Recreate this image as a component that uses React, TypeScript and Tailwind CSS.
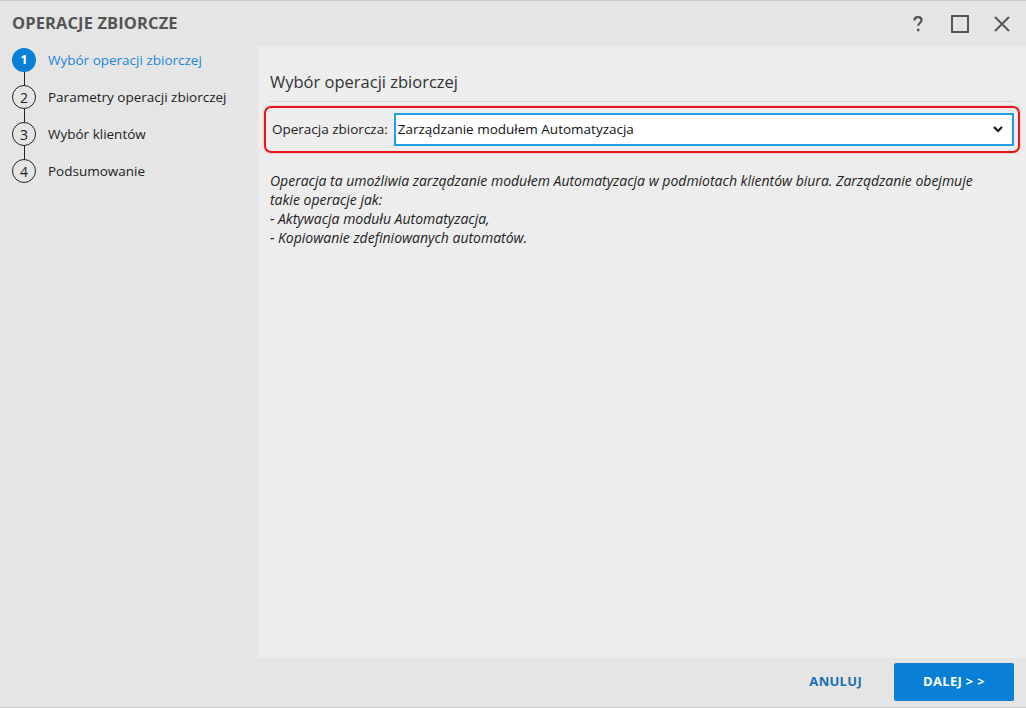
import React from "react";

const steps = [
  { n: 1, label: "Wybór operacji zbiorczej", active: true },
  { n: 2, label: "Parametry operacji zbiorczej", active: false },
  { n: 3, label: "Wybór klientów", active: false },
  { n: 4, label: "Podsumowanie", active: false },
];

export default function App() {
  return (
    <div
      className="w-[1026px] h-[708px] bg-[#e5e5e5] border-t border-b border-[#c8c8c8] flex flex-col overflow-hidden text-[#222]"
      style={{ fontFamily: '"Open Sans", "Noto Sans", sans-serif' }}
    >
      {/* header */}
      <div className="h-[45px] shrink-0 flex items-center pl-[12px] pr-[14px]">
        <div className="text-[16.5px] font-bold text-[#555] tracking-[0.1px] flex-1">OPERACJE ZBIORCZE</div>
        <div className="flex items-center gap-[22px] text-[#555]">
          <svg width="20" height="20" viewBox="0 0 20 20" fill="none">
            <path d="M6.5 6.5c0-2 1.6-3.3 3.5-3.3s3.5 1.2 3.5 3.1c0 2.6-3.3 2.8-3.3 5.4" stroke="#555" strokeWidth="2.2" fill="none" />
            <circle cx="10.2" cy="16" r="1.4" fill="#555" />
          </svg>
          <svg width="20" height="20" viewBox="0 0 20 20">
            <rect x="2" y="2" width="16" height="16" stroke="#555" strokeWidth="2" fill="none" />
          </svg>
          <svg width="20" height="20" viewBox="0 0 20 20">
            <path d="M3 3L17 17M17 3L3 17" stroke="#555" strokeWidth="2" />
          </svg>
        </div>
      </div>
      <div className="flex flex-1 min-h-0">
        {/* sidebar */}
        <div className="w-[258px] shrink-0 pl-[12px] pt-[2px]">
          {steps.map((s, i) => (
            <div key={s.n} className="flex flex-col">
              {i > 0 && <div className="ml-[11.5px] w-px h-[13px] bg-[#222]" />}
              <div className="flex items-center h-[24px]">
                <div
                  className={
                    s.active
                      ? "w-[24px] h-[24px] rounded-full bg-[#0a7fd6] text-white flex items-center justify-center text-[13px] font-bold"
                      : "w-[24px] h-[24px] rounded-full border-[1.5px] border-[#222] text-[#222] flex items-center justify-center text-[14px]"
                  }
                >
                  {s.n}
                </div>
                <div className={"ml-[12px] text-[13.5px] " + (s.active ? "text-[#1a88d8]" : "text-[#222]")}>{s.label}</div>
              </div>
            </div>
          ))}
        </div>
        {/* content */}
        <div className="flex-1 bg-[#ededed] px-[12px] pt-[24px]">
          <div className="text-[16.5px] text-[#333] pb-[6px] border-b border-[#d4d4d4]">Wybór operacji zbiorczej</div>
          <div className="mt-[4px] ml-[-6px] mr-[-6px] border-2 border-[#e8141c] rounded-[7px] px-[4px] py-[5px] flex items-center shadow-[0_0_2px_rgba(232,20,28,0.4)]">
            <div className="text-[13.5px] text-[#222] pl-[2px] pr-[6px] whitespace-nowrap">Operacja zbiorcza:</div>
            <div className="flex-1 h-[33px] bg-white border-2 border-[#1ea0e2] flex items-center pl-[2px] pr-[8px]">
              <div className="flex-1 text-[13.5px] text-[#111]">Zarządzanie modułem Automatyzacja</div>
              <svg width="12" height="12" viewBox="0 0 12 12">
                <path d="M2 4l4 4 4-4" stroke="#111" strokeWidth="2" fill="none" />
              </svg>
            </div>
          </div>
          <div className="mt-[18px] text-[14px] italic leading-[19px] text-[#222] pr-[20px]">
            Operacja ta umożliwia zarządzanie modułem Automatyzacja w podmiotach klientów biura. Zarządzanie obejmuje
            <br />
            takie operacje jak:
            <br />- Aktywacja modułu Automatyzacja,
            <br />- Kopiowanie zdefiniowanych automatów.
          </div>
        </div>
      </div>
      {/* footer */}
      <div className="h-[49px] shrink-0 flex items-center justify-end pr-[12px] pb-[1px]">
        <button className="text-[13px] font-bold text-[#1d6fae] mr-[32px] tracking-[0.3px]">ANULUJ</button>
        <button className="w-[120px] h-[38px] bg-[#0a7fd6] rounded-[2px] text-white text-[13px] font-bold tracking-[0.3px]">DALEJ &gt; &gt;</button>
      </div>
    </div>
  );
}
